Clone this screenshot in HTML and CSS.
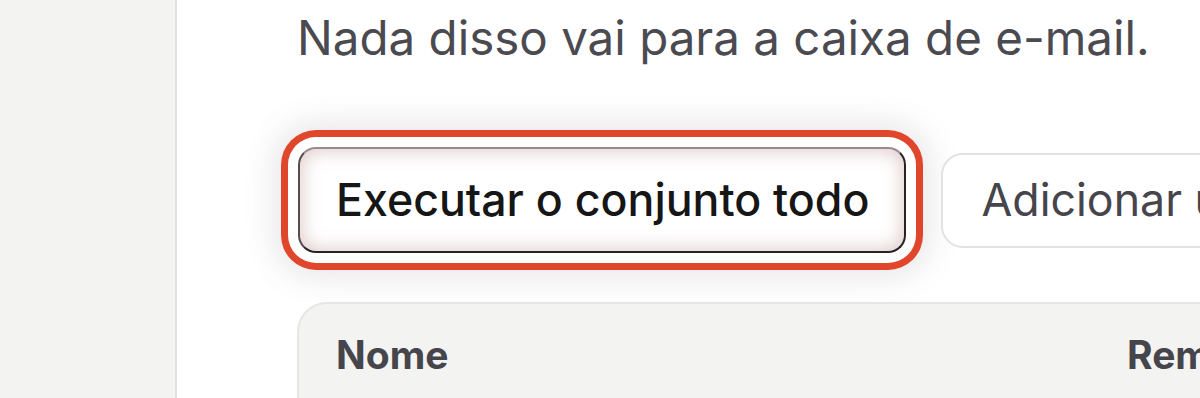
FILE: index.html
```html
<!DOCTYPE html>
<html lang="pt">
<head>
<meta charset="utf-8">
<link rel="stylesheet" href="styles.css">
</head>
<body>
<div class="app">
  <aside class="sidebar"></aside>
  <main class="main">
    <p class="lead">Nada disso vai para a caixa de e-mail.</p>
    <div class="actions">
      <button class="btn btn-primary">Executar o conjunto todo</button>
      <button class="btn btn-secondary">Adicionar um teste</button>
    </div>
    <div class="table-card">
      <div class="table-head">
        <span class="col col-name">Nome</span>
        <span class="col col-rem">Remetente</span>
      </div>
    </div>
  </main>
</div>
</body>
</html>
```
FILE: styles.css
```css
* { box-sizing: border-box; }
html, body { margin: 0; padding: 0; background: #fff; }
body {
  width: 1200px;
  height: 398px;
  overflow: hidden;
  font-family: Inter, "Noto Sans", sans-serif;
}
.app {
  display: flex;
  height: 398px;
  overflow: hidden;
}
.sidebar {
  flex: 0 0 177px;
  background: #f3f3f1;
  border-right: 2px solid #e0e0de;
}
.main {
  flex: 1;
  min-width: 0;
  padding: 9px 0 0 120px;
}
.lead {
  margin: 0;
  font-size: 47.5px;
  line-height: 57px;
  color: #4a4a50;
  white-space: nowrap;
}
.actions {
  display: flex;
  align-items: center;
  gap: 35px;
  margin-top: 81px;
  padding-left: 1px;
  white-space: nowrap;
}
.btn {
  flex: 0 0 auto;
  font-family: Inter, "Noto Sans", sans-serif;
  font-size: 44.7px;
  background: #fff;
  white-space: nowrap;
  cursor: pointer;
}
.btn-primary {
  height: 106px;
  padding: 0 35px 0 36px;
  font-weight: 500;
  color: #161616;
  border: 2px solid #2b2222;
  border-top-color: #9a8a8a;
  border-left-color: #5a4a4a;
  border-radius: 18px;
  box-shadow:
    inset 0 0 20px rgba(160, 100, 100, 0.4),
    0 0 0 10px #fff,
    0 0 0 17px #e0462b,
    0 0 30px 24px rgba(120, 100, 100, 0.16);
}
.btn-secondary {
  height: 95px;
  padding: 0 38px;
  font-weight: 400;
  color: #45454b;
  border: 2px solid #e2e2e0;
  border-radius: 22px;
}
.table-card {
  margin-top: 49px;
  width: 1100px;
  height: 200px;
  background: #f3f3f1;
  border: 2px solid #e6e6e4;
  border-radius: 30px;
}
.table-head {
  display: flex;
  padding: 27px 0 0 37px;
  font-size: 39px;
  font-weight: 700;
  color: #45454b;
  white-space: nowrap;
}
.col { flex: 0 0 auto; }
.col-name { width: 791px; }
```
